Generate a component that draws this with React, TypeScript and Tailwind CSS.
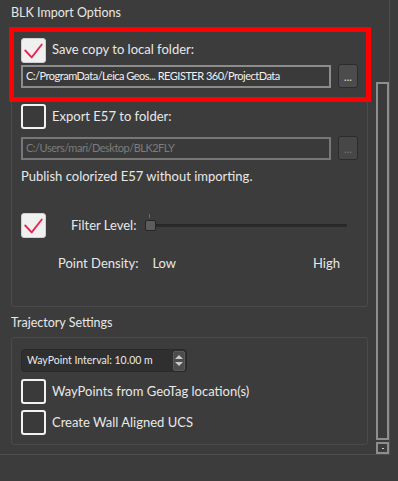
import React from 'react';

// ============================================
// BLK IMPORT OPTIONS PANEL
// ============================================

function CheckBox({ checked }: { checked?: boolean }) {
  if (checked) {
    return (
      <div className="w-[25px] h-[25px] shrink-0 rounded-[3px] bg-[#f0f0f0] border border-[#d0d0d0] flex items-center justify-center">
        <svg width="25" height="25" viewBox="0 0 25 25">
          <path d="M3.5 12.5 L10.5 20 L21.5 6" fill="none" stroke="#e8234e" strokeWidth="2" strokeLinecap="round" strokeLinejoin="round" />
        </svg>
      </div>
    );
  }
  return <div className="w-[25px] h-[25px] shrink-0 rounded-[3px] border-2 border-[#f2f2f2] bg-[#3a3a3a]" />;
}

function PathField({ value, disabled }: { value: string; disabled?: boolean }) {
  return (
    <div className="flex items-center gap-[7px]">
      <div
        className={`w-[310px] shrink-0 h-[23px] border-2 ${disabled ? 'border-[#777]' : 'border-[#8c8c8c]'} bg-[#3a3a3a] flex items-center px-[3px] overflow-hidden ${disabled ? 'text-[#7c7c7c]' : 'text-[#f0f0f0]'}`}
      >
        <span className="text-[11px] tracking-[-0.5px] whitespace-nowrap">{value}</span>
      </div>
      <div
        className={`w-[20px] shrink-0 h-[24px] rounded-[3px] border border-[#2c2c2c] flex items-end justify-center pb-[5px] text-[11px] leading-none ${disabled ? 'bg-[#474747] text-[#777]' : 'bg-[#4c4c4c] text-[#e0e0e0]'}`}
      >
        ...
      </div>
    </div>
  );
}

export default function App() {
  return (
    <div
      className="relative w-[398px] h-[481px] bg-[#3c3c3c] overflow-hidden text-[#e8e8e8]"
      style={{ fontFamily: 'Lato, "Noto Sans", sans-serif' }}
    >
      <div className="w-[390px] h-[455px] border-r border-b border-[#4e4e4e] flex">
        {/* Contenido */}
        <div className="w-[377px] pl-[11px]">
          <div className="text-[12.5px] leading-none pt-[7px] h-[27px]">BLK Import Options</div>

          {/* Grupo 1 */}
          <div className="w-[357px] h-[280px] border border-[#4a4a4a] rounded-[3px] pl-[9px] pt-[9px]">
            <div className="relative">
              <div className="absolute -left-[12px] -top-[10px] w-[362px] h-[75px] border-[5px] border-[#ff0000] pointer-events-none" />
              <div className="flex items-center gap-[6px] h-[26px]">
                <CheckBox checked />
                <span className="text-[13px]">Save copy to local folder:</span>
              </div>
              <div className="mt-[1px]">
                <PathField value="C:/ProgramData/Leica Geos... REGISTER 360/ProjectData" />
              </div>
            </div>

            <div className="flex items-center gap-[6px] h-[25px] mt-[16px]">
              <CheckBox />
              <span className="text-[13px]">Export E57 to folder:</span>
            </div>
            <div className="mt-[7px]">
              <PathField value="C:/Users/mari/Desktop/BLK2FLY" disabled />
            </div>
            <div className="text-[13px] mt-[6px] leading-[20px]">Publish colorized E57 without importing.</div>

            <div className="flex items-center h-[25px] mt-[27px]">
              <CheckBox checked />
              <span className="text-[13px] ml-[25px] w-[50px] whitespace-nowrap">Filter Level:</span>
              {/* Slider */}
              <div className="relative ml-[24px] w-[202px] h-[25px] flex items-center">
                <div className="absolute left-[4px] top-[1px] w-px h-[4px] bg-[#6a6a6a]" />
                <div className="absolute left-[9px] right-0 top-[11px] h-[3px] rounded-full bg-[#2a2a2a] border-t border-[#262626]" />
                <div className="relative w-[11px] h-[11px] rounded-[2px] bg-[#5c5c5c] border border-[#262626]" />
              </div>
            </div>

            <div className="flex items-center text-[13px] mt-[16px] h-[20px]">
              <span className="ml-[37px]">Point Density:</span>
              <span className="ml-[14px]">Low</span>
              <span className="ml-auto mr-[27px]">High</span>
            </div>
          </div>

          <div className="text-[12.5px] leading-none pt-[10px] h-[30px]">Trajectory Settings</div>

          {/* Grupo 2 */}
          <div className="w-[357px] h-[108px] border border-[#4a4a4a] rounded-[3px] pl-[9px] pt-[11px]">
            <div className="w-[166px] h-[23px] rounded-[4px] bg-[#2f2f2f] border border-[#292929] flex items-center justify-between pl-[5px] pr-px">
              <span className="text-[10.5px] whitespace-nowrap">WayPoint Interval: 10.00 m</span>
              <div className="w-[12px] h-[20px] rounded-[2px] bg-[#4c4c4c] border border-[#5a5a5a] flex flex-col items-center justify-center gap-[3px]">
                <div className="w-0 h-0 border-l-[4px] border-r-[4px] border-b-[4px] border-l-transparent border-r-transparent border-b-[#c8c8c8]" />
                <div className="w-0 h-0 border-l-[4px] border-r-[4px] border-t-[4px] border-l-transparent border-r-transparent border-t-[#c8c8c8]" />
              </div>
            </div>
            <div className="flex items-center gap-[6px] h-[25px] mt-[7px]">
              <CheckBox />
              <span className="text-[13px]">WayPoints from GeoTag location(s)</span>
            </div>
            <div className="flex items-center gap-[6px] h-[25px] mt-[6px]">
              <CheckBox />
              <span className="text-[13px]">Create Wall Aligned UCS</span>
            </div>
          </div>
        </div>

        {/* Scrollbar */}
        <div className="w-[13px] flex flex-col pt-[82px]">
          <div className="h-[358px] border-2 border-[#8e8e8e] bg-[#3a3a3a]" />
          <div className="h-[12px] mt-[2px] border-2 border-[#8e8e8e] flex items-center justify-center">
            <div className="w-[2px] h-px bg-[#cfcfcf]" />
          </div>
        </div>
      </div>
    </div>
  );
}
